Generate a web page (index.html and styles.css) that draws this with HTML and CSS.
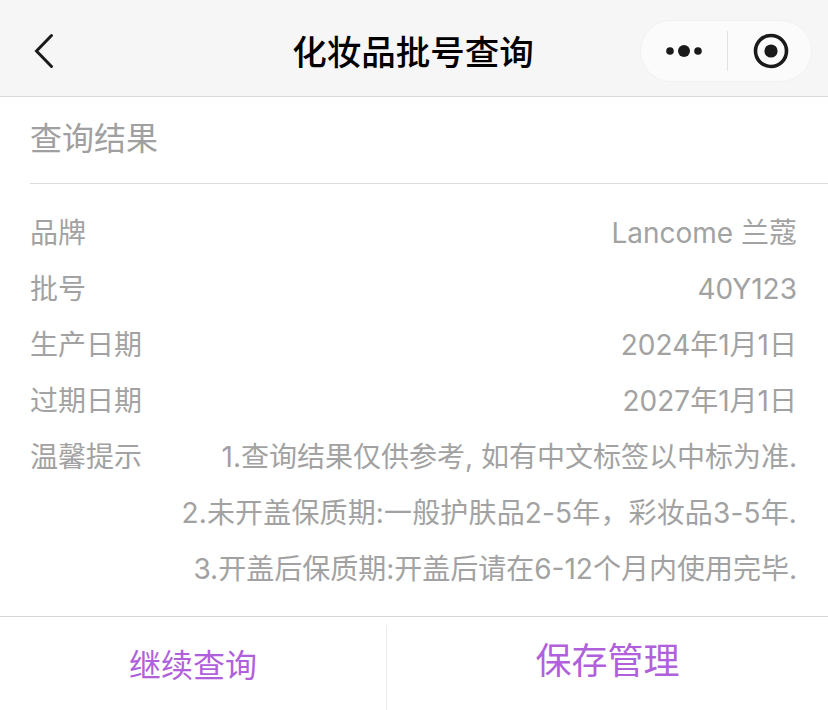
FILE: index.html
```html
<!DOCTYPE html>
<html lang="zh-CN">
<head>
<meta charset="utf-8">
<title>化妆品批号查询</title>
<link rel="stylesheet" href="styles.css">
</head>
<body>
<div class="page">
  <header class="nav">
    <svg class="back" width="24" height="36" viewBox="0 0 24 36"><path d="M19.5 2.5 L4.5 18 L19.5 33.5" fill="none" stroke="#1a1a1a" stroke-width="3" stroke-linecap="round" stroke-linejoin="miter"/></svg>
    <h1 class="title">化妆品批号查询</h1>
    <div class="capsule">
      <svg class="dots" width="40" height="14" viewBox="0 0 40 14"><circle cx="5" cy="7" r="3.8" fill="#1a1a1a"/><circle cx="19" cy="7" r="6" fill="#1a1a1a"/><circle cx="33" cy="7" r="3.8" fill="#1a1a1a"/></svg>
      <span class="capsule-sep"></span>
      <svg class="target" width="36" height="36" viewBox="0 0 36 36"><circle cx="18" cy="18" r="15.5" fill="none" stroke="#1a1a1a" stroke-width="3.6"/><circle cx="18" cy="18" r="6.6" fill="#1a1a1a"/></svg>
    </div>
  </header>
  <main class="content">
    <h2 class="section">查询结果</h2>
    <dl class="rows">
      <div class="row"><dt>品牌</dt><dd>Lancome 兰蔻</dd></div>
      <div class="row"><dt>批号</dt><dd>40Y123</dd></div>
      <div class="row"><dt>生产日期</dt><dd>2024年1月1日</dd></div>
      <div class="row"><dt>过期日期</dt><dd>2027年1月1日</dd></div>
      <div class="row"><dt>温馨提示</dt><dd>1.查询结果仅供参考, 如有中文标签以中标为准.</dd></div>
      <div class="row row-wide"><dt></dt><dd>2.未开盖保质期:一般护肤品2-5年，彩妆品3-5年.</dd></div>
      <div class="row"><dt></dt><dd>3.开盖后保质期:开盖后请在6-12个月内使用完毕.</dd></div>
    </dl>
  </main>
  <footer class="actions">
    <div class="action action-left">继续查询</div>
    <div class="action action-right">保存管理</div>
  </footer>
</div>
</body>
</html>
```
FILE: styles.css
```css
* { box-sizing: border-box; }
html, body { margin: 0; padding: 0; background: #fff; }
body { font-family: Inter, "Noto Sans CJK SC", sans-serif; }
.page { width: 828px; height: 710px; display: flex; flex-direction: column; overflow: hidden; }
.nav { height: 97px; flex: none; background: #f6f6f6; border-bottom: 1px solid #d9d9d9; display: flex; align-items: center; position: relative; padding: 8px 16px 0 32px; }
.back { flex: none; margin-top: -2px; }
.title { position: absolute; left: 0; right: 2px; top: 31px; margin: 0; text-align: center; font-size: 34.5px; line-height: 44px; font-weight: 500; color: #000; }
.capsule { margin-left: auto; margin-top: -2px; width: 172px; height: 62px; border-radius: 31px; background: #fbfbfb; border: 1px solid #f1f1f1; display: flex; align-items: center; padding-left: 24px; }
.dots { flex: none; }
.capsule-sep { flex: none; width: 1px; height: 40px; background: #e2e2e2; margin-left: 22px; }
.target { flex: none; margin-left: 25px; }
.content { flex: 1; min-height: 0; padding-left: 30px; }
.section { margin: 0; height: 87px; border-bottom: 1px solid #dcdcdc; padding: 18px 0 0 0; font-size: 32px; line-height: 48px; font-weight: 400; color: #a0a0a0; }
.rows { margin: 21px 0 0; padding: 0 31px 0 0; }
.row { height: 56px; display: flex; justify-content: space-between; align-items: center; font-size: 28px; line-height: 56px; color: #a2a2a2; }
.row-wide { letter-spacing: .15px; }
.row dt { flex: none; }
.row dd { margin: 0; white-space: nowrap; }
.actions { height: 94px; flex: none; border-top: 1px solid #d6d6d6; display: flex; padding-top: 8px; }
.action { color: #b160dc; text-align: center; }
.action-left { width: 387px; border-right: 1px solid #ececec; font-size: 32px; line-height: 64px; padding-top: 9px; }
.action-right { flex: 1; font-size: 36px; line-height: 72px; }
```
